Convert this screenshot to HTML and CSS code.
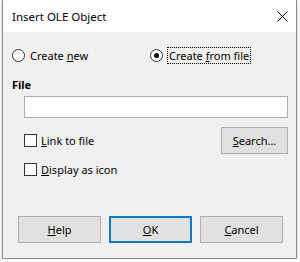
FILE: index.html
```html
<!DOCTYPE html>
<html lang="en">
<head>
  <meta charset="UTF-8">
  <title>Insert OLE Object</title>
  <link rel="stylesheet" href="styles.css">
</head>
<body>
  <div class="window">
    <div class="titlebar">
      <span class="title">Insert OLE Object</span>
      <svg class="close" width="11" height="11" viewBox="0 0 11 11">
        <path d="M0.5 0.5 L10.5 10.5 M10.5 0.5 L0.5 10.5" stroke="#000" stroke-width="1" fill="none"/>
      </svg>
    </div>

    <div class="content">
      <div class="radios">
        <label class="radio"><span class="dot"></span><span>Create <u>n</u>ew</span></label>
        <label class="radio checked"><span class="dot"></span><span class="focus">Create <u>f</u>rom file</span></label>
      </div>

      <div class="section">File</div>
      <div class="input"></div>

      <div class="row first">
        <label class="check"><span class="box"></span><span><u>L</u>ink to file</span></label>
        <button class="btn search"><u>S</u>earch...</button>
      </div>
      <div class="row">
        <label class="check"><span class="box"></span><span><u>D</u>isplay as icon</span></label>
      </div>

      <div class="buttons">
        <button class="btn"><u>H</u>elp</button>
        <button class="btn default"><u>O</u>K</button>
        <button class="btn"><u>C</u>ancel</button>
      </div>
    </div>
  </div>
</body>
</html>
```

FILE: styles.css
```css
body {
  margin: 0;
  background: #fff;
  font-family: "Noto Sans", sans-serif;
  font-size: 11px;
  color: #000;
}
.window {
  width: 293px;
  height: 258px;
  margin-left: 2px;
  border: 1px solid #8c8c8c;
  border-top: none;
  background: #f0f0f0;
  box-shadow: 0 1px 3px rgba(0,0,0,0.25);
  display: flex;
  flex-direction: column;
}
.titlebar {
  height: 32px;
  background: #fff;
  display: flex;
  align-items: center;
  justify-content: space-between;
  padding: 0 8px 0 9px;
}
.title {
  font-size: 11.5px;
}
.close {
  margin-top: 1px;
}
.content {
  flex: 1;
  padding: 15px 8px 0 9px;
  display: flex;
  flex-direction: column;
}
.radios {
  display: flex;
  height: 17px;
  align-items: center;
}
.radio {
  display: flex;
  align-items: center;
}
.radio:first-child {
  width: 138px;
}
.dot {
  width: 11px;
  height: 11px;
  border: 1px solid #333;
  border-radius: 50%;
  background: #fff;
  margin-right: 5px;
  position: relative;
}
.checked .dot::after {
  content: "";
  position: absolute;
  left: 3px;
  top: 3px;
  width: 5px;
  height: 5px;
  border-radius: 50%;
  background: #000;
}
.focus {
  outline: 1px dotted #000;
  padding: 0 1px;
}
.section {
  font-weight: bold;
  margin-top: 13px;
  height: 17px;
}
.input {
  margin: 2px 0 0 12px;
  height: 20px;
  background: #fff;
  border: 1px solid #adadad;
}
.row {
  display: flex;
  align-items: center;
  justify-content: space-between;
  margin-left: 12px;
  height: 28px;
}
.row.first {
  margin-top: 8px;
  margin-bottom: 1px;
}
.check {
  display: flex;
  align-items: center;
}
.box {
  width: 11px;
  height: 11px;
  border: 1px solid #333;
  background: #fff;
  margin-right: 4px;
}
.btn {
  font-family: "Noto Sans", sans-serif;
  font-size: 11px;
  color: #000;
  width: 83px;
  height: 27px;
  background: #e1e1e1;
  border: 1px solid #adadad;
  padding: 0;
}
.search {
  width: 67px;
}
.buttons {
  display: flex;
  gap: 8px;
  margin-top: 33px;
  padding-left: 6px;
}
.default {
  border: 2px solid #0078d7;
}
```
